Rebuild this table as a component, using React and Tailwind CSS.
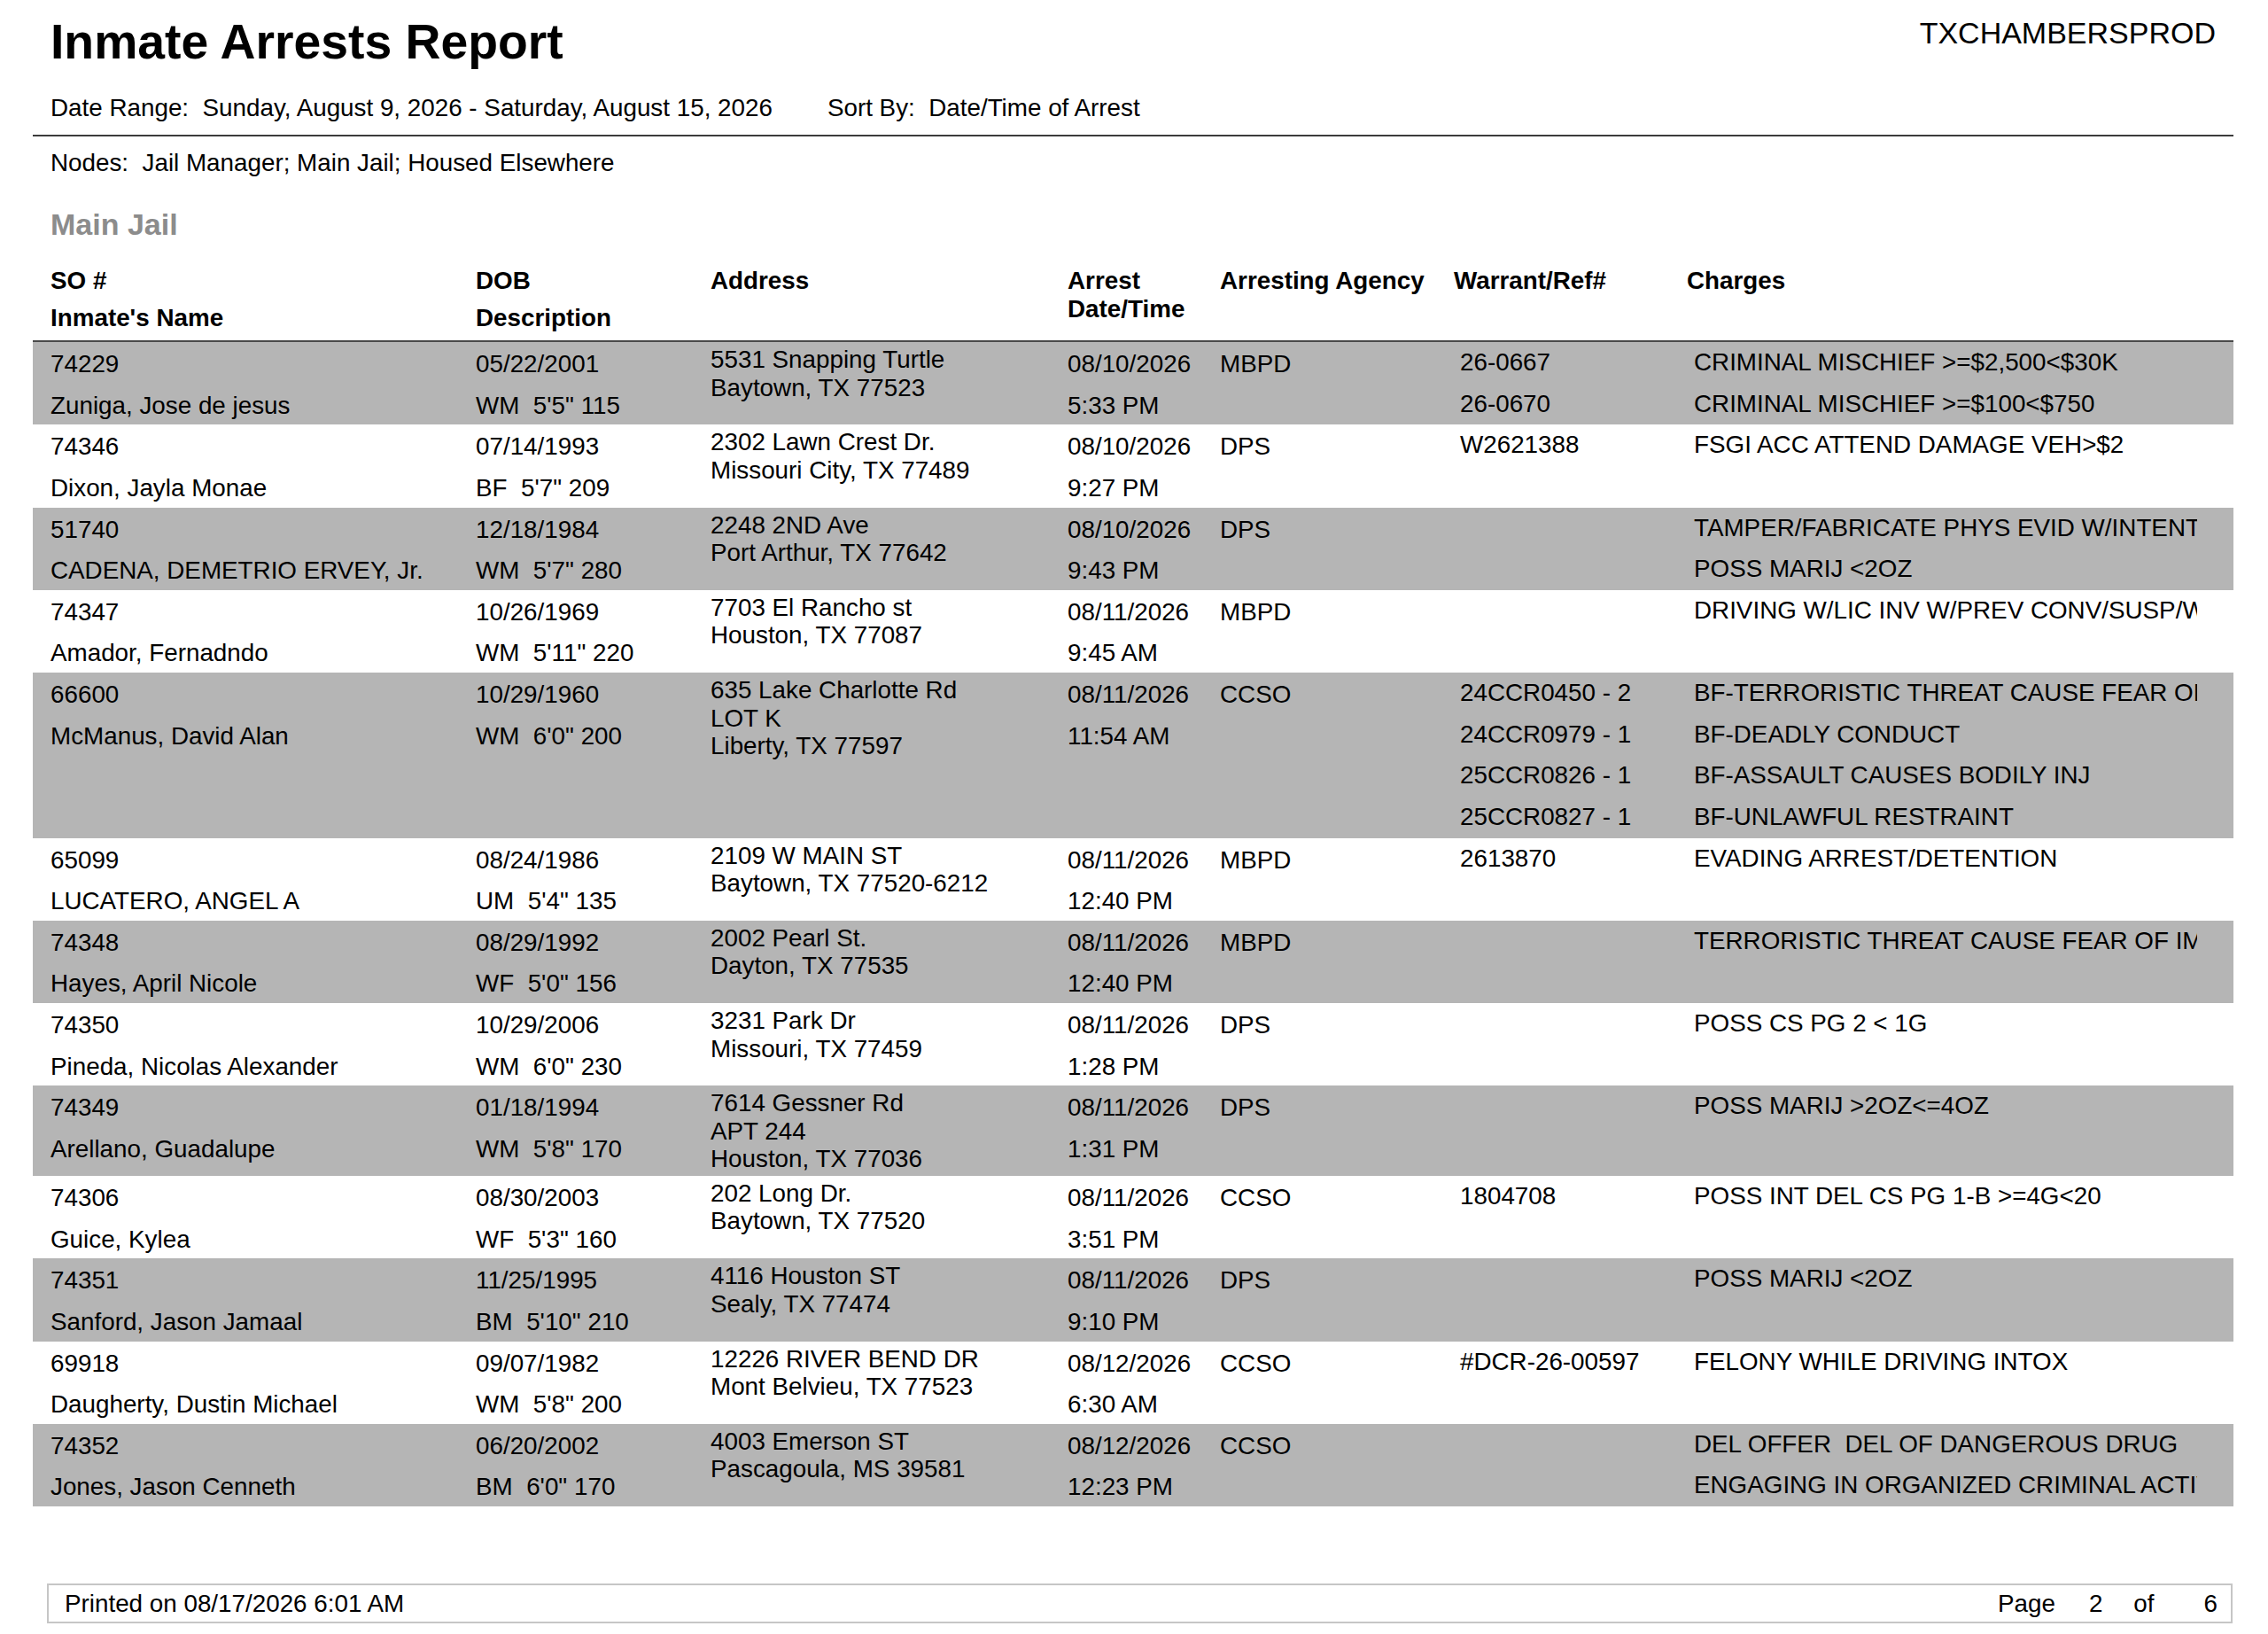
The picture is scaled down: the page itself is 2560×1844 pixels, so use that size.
import React from 'react'

const rows = [
  { so: '74229', name: 'Zuniga, Jose de jesus', dob: '05/22/2001', desc: 'WM  5\'5" 115', addr: ['5531 Snapping Turtle', 'Baytown, TX 77523'], date: '08/10/2026', time: '5:33 PM', agency: 'MBPD', warrants: ['26-0667', '26-0670'], charges: ['CRIMINAL MISCHIEF >=$2,500<$30K', 'CRIMINAL MISCHIEF >=$100<$750'] },
  { so: '74346', name: 'Dixon, Jayla Monae', dob: '07/14/1993', desc: 'BF  5\'7" 209', addr: ['2302 Lawn Crest Dr.', 'Missouri City, TX 77489'], date: '08/10/2026', time: '9:27 PM', agency: 'DPS', warrants: ['W2621388'], charges: ['FSGI ACC ATTEND DAMAGE VEH>$2'] },
  { so: '51740', name: 'CADENA, DEMETRIO ERVEY, Jr.', dob: '12/18/1984', desc: 'WM  5\'7" 280', addr: ['2248 2ND Ave', 'Port Arthur, TX 77642'], date: '08/10/2026', time: '9:43 PM', agency: 'DPS', warrants: [], charges: ['TAMPER/FABRICATE PHYS EVID W/INTENT TO IMPAIR', 'POSS MARIJ <2OZ'] },
  { so: '74347', name: 'Amador, Fernadndo', dob: '10/26/1969', desc: 'WM  5\'11" 220', addr: ['7703 El Rancho st', 'Houston, TX 77087'], date: '08/11/2026', time: '9:45 AM', agency: 'MBPD', warrants: [], charges: ['DRIVING W/LIC INV W/PREV CONV/SUSP/W/O FIN RES'] },
  { so: '66600', name: 'McManus, David Alan', dob: '10/29/1960', desc: 'WM  6\'0" 200', addr: ['635 Lake Charlotte Rd', 'LOT K', 'Liberty, TX 77597'], date: '08/11/2026', time: '11:54 AM', agency: 'CCSO', warrants: ['24CCR0450 - 2', '24CCR0979 - 1', '25CCR0826 - 1', '25CCR0827 - 1'], charges: ['BF-TERRORISTIC THREAT CAUSE FEAR OF IMMINENT SBI', 'BF-DEADLY CONDUCT', 'BF-ASSAULT CAUSES BODILY INJ', 'BF-UNLAWFUL RESTRAINT'] },
  { so: '65099', name: 'LUCATERO, ANGEL A', dob: '08/24/1986', desc: 'UM  5\'4" 135', addr: ['2109 W MAIN ST', 'Baytown, TX 77520-6212'], date: '08/11/2026', time: '12:40 PM', agency: 'MBPD', warrants: ['2613870'], charges: ['EVADING ARREST/DETENTION'] },
  { so: '74348', name: 'Hayes, April Nicole', dob: '08/29/1992', desc: 'WF  5\'0" 156', addr: ['2002 Pearl St.', 'Dayton, TX 77535'], date: '08/11/2026', time: '12:40 PM', agency: 'MBPD', warrants: [], charges: ['TERRORISTIC THREAT CAUSE FEAR OF IMMINENT SBI'] },
  { so: '74350', name: 'Pineda, Nicolas Alexander', dob: '10/29/2006', desc: 'WM  6\'0" 230', addr: ['3231 Park Dr', 'Missouri, TX 77459'], date: '08/11/2026', time: '1:28 PM', agency: 'DPS', warrants: [], charges: ['POSS CS PG 2 < 1G'] },
  { so: '74349', name: 'Arellano, Guadalupe', dob: '01/18/1994', desc: 'WM  5\'8" 170', addr: ['7614 Gessner Rd', 'APT 244', 'Houston, TX 77036'], date: '08/11/2026', time: '1:31 PM', agency: 'DPS', warrants: [], charges: ['POSS MARIJ >2OZ<=4OZ'] },
  { so: '74306', name: 'Guice, Kylea', dob: '08/30/2003', desc: 'WF  5\'3" 160', addr: ['202 Long Dr.', 'Baytown, TX 77520'], date: '08/11/2026', time: '3:51 PM', agency: 'CCSO', warrants: ['1804708'], charges: ['POSS INT DEL CS PG 1-B >=4G<20'] },
  { so: '74351', name: 'Sanford, Jason Jamaal', dob: '11/25/1995', desc: 'BM  5\'10" 210', addr: ['4116 Houston ST', 'Sealy, TX 77474'], date: '08/11/2026', time: '9:10 PM', agency: 'DPS', warrants: [], charges: ['POSS MARIJ <2OZ'] },
  { so: '69918', name: 'Daugherty, Dustin Michael', dob: '09/07/1982', desc: 'WM  5\'8" 200', addr: ['12226 RIVER BEND DR', 'Mont Belvieu, TX 77523'], date: '08/12/2026', time: '6:30 AM', agency: 'CCSO', warrants: ['#DCR-26-00597'], charges: ['FELONY WHILE DRIVING INTOX'] },
  { so: '74352', name: 'Jones, Jason Cenneth', dob: '06/20/2002', desc: 'BM  6\'0" 170', addr: ['4003 Emerson ST', 'Pascagoula, MS 39581'], date: '08/12/2026', time: '12:23 PM', agency: 'CCSO', warrants: [], charges: ['DEL OFFER  DEL OF DANGEROUS DRUG', 'ENGAGING IN ORGANIZED CRIMINAL ACTIVITY'] },
]

const cols = 'grid grid-cols-[480px_265px_403px_172px_264px_263px_576px] pl-[20px]'

function Lines({ items }) {
  return (
    <div className="flex flex-col pt-[2px] -mb-[2px] leading-[46.6px]">
      {items.map((t, i) => (
        <span key={i} className="whitespace-pre">{t}</span>
      ))}
    </div>
  )
}

function Row({ r, shaded }) {
  return (
    <div className={cols + ' min-h-[93.3px] ' + (shaded ? 'bg-[#b5b5b5]' : 'bg-white')}>
      <Lines items={[r.so, r.name]} />
      <Lines items={[r.dob, r.desc]} />
      <div className="flex flex-col pt-[4px] pb-[3px] leading-[31.5px]">
        {r.addr.map((a, i) => (
          <span key={i} className="whitespace-nowrap">{a}</span>
        ))}
      </div>
      <Lines items={[r.date, r.time]} />
      <Lines items={[r.agency]} />
      <div className="flex flex-col leading-[46.6px] pl-[7px]">
        {r.warrants.map((w, i) => (
          <span key={i} className="whitespace-nowrap">{w}</span>
        ))}
      </div>
      <div className="flex flex-col leading-[46.6px] pl-[8px] overflow-hidden">
        {r.charges.map((c, i) => (
          <span key={i} className="whitespace-pre">{c}</span>
        ))}
      </div>
    </div>
  )
}

export default function App() {
  return (
    <div className="w-[2560px] min-h-[1844px] bg-white text-black text-[27.8px] font-['Liberation_Sans',Arial,sans-serif]">
      <div className="pl-[37px] pr-[39px]">
        <div className="flex justify-between items-start pt-[20px] pl-[20px] pr-[20px]">
          <h1 className="text-[55.3px] leading-[55px] font-bold">Inmate Arrests Report</h1>
          <div className="text-[34px] leading-[34px]">TXCHAMBERSPROD</div>
        </div>
        <div className="flex mt-[27px] pl-[20px] leading-[40px]">
          <span className="whitespace-pre">Date Range:  Sunday, August 9, 2026 - Saturday, August 15, 2026</span>
          <span className="whitespace-pre ml-[62px]">Sort By:  Date/Time of Arrest</span>
        </div>
        <div className="mt-[10px] h-[2px] bg-[#3c3c3c]" />
        <div className="mt-[10px] pl-[20px] leading-[40px] whitespace-pre">Nodes:  Jail Manager; Main Jail; Housed Elsewhere</div>
        <div className="mt-[29px] pl-[20px] leading-[40px] text-[34px] font-bold text-[#8c8c8c]">Main Jail</div>

        <div className={cols + ' mt-[20px] h-[93px] font-bold border-b-2 border-[#4a4a4a]'}>
          <div className="flex flex-col pt-[3px] leading-[42px]">
            <span>SO #</span>
            <span>Inmate's Name</span>
          </div>
          <div className="flex flex-col pt-[3px] leading-[42px]">
            <span>DOB</span>
            <span>Description</span>
          </div>
          <div className="pt-[3px] leading-[42px]">Address</div>
          <div className="flex flex-col pt-[8px] leading-[32px]">
            <span>Arrest</span>
            <span>Date/Time</span>
          </div>
          <div className="pt-[3px] leading-[42px] whitespace-nowrap">Arresting Agency</div>
          <div className="pt-[3px] leading-[42px]">Warrant/Ref#</div>
          <div className="pt-[3px] leading-[42px]">Charges</div>
        </div>

        <div className="flex flex-col">
          {rows.map((r, i) => (
            <Row key={r.so} r={r} shaded={i % 2 === 0} />
          ))}
        </div>
      </div>

      <div className="mt-[87px] ml-[53px] mr-[40px] h-[45px] border-2 border-[#c6c6c6] flex items-center justify-between pl-[18px] pr-[15px]">
        <span>Printed on 08/17/2026 6:01 AM</span>
        <div className="flex">
          <span>Page</span>
          <span className="ml-[38px]">2</span>
          <span className="ml-[35px]">of</span>
          <span className="ml-[56px]">6</span>
        </div>
      </div>
    </div>
  )
}
